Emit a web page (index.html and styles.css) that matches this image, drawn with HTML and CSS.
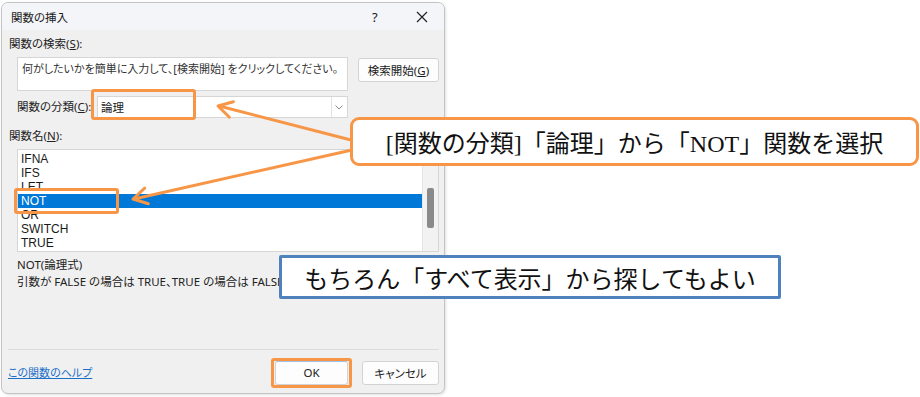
FILE: index.html
```html
<!DOCTYPE html>
<html lang="ja">

<head>
    <meta charset="UTF-8">
    <meta name="viewport" content="width=device-width, initial-scale=1.0">
    <title>関数の挿入</title>
    <link rel="stylesheet" href="styles.css">
</head>

<body>
    <div class="page">
        <div class="dialog">
            <div class="titlebar">
                <span class="title">関数の挿入</span>
                <span class="help">?</span>
                <svg class="close" width="12" height="12" viewBox="0 0 12 12">
                    <path d="M1 1 L11 11 M11 1 L1 11" stroke="#222" stroke-width="1.2" fill="none"/>
                </svg>
            </div>

            <div class="content">
                <div class="label">関数の検索(<u>S</u>):</div>
                <div class="search-row">
                    <div class="search-box">何がしたいかを簡単に入力して、[検索開始] をクリックしてください。</div>
                    <button class="btn search-btn">検索開始(<u>G</u>)</button>
                </div>

                <div class="category-row">
                    <span class="label category-label">関数の分類(<u>C</u>):</span>
                    <div class="select">
                        <span class="select-value">論理</span>
                        <span class="chevron">
                            <svg width="8" height="5" viewBox="0 0 8 5">
                                <path d="M0.5 0.5 L4 4 L7.5 0.5" stroke="#888" stroke-width="1" fill="none"/>
                            </svg>
                        </span>
                    </div>
                </div>

                <div class="label names-label">関数名(<u>N</u>):</div>
                <div class="listbox">
                    <ul class="items">
                        <li>IFNA</li>
                        <li>IFS</li>
                        <li>LET</li>
                        <li class="selected">NOT</li>
                        <li>OR</li>
                        <li>SWITCH</li>
                        <li>TRUE</li>
                    </ul>
                    <div class="scrollbar">
                        <div class="thumb"></div>
                    </div>
                </div>

                <div class="desc">
                    <p class="syntax">NOT(論理式)</p>
                    <p>引数が FALSE の場合は TRUE、TRUE の場合は FALSE を返します。</p>
                </div>
            </div>

            <div class="footer">
                <a href="#" class="help-link">この関数のヘルプ</a>
                <div class="buttons">
                    <button class="btn ok-btn">OK</button>
                    <button class="btn cancel-btn">キャンセル</button>
                </div>
            </div>
        </div>

        <!-- annotations drawn over the dialog -->
        <div class="mark mark-category"></div>
        <div class="mark mark-not"></div>
        <div class="mark mark-ok"></div>

        <svg class="arrows" width="920" height="397" viewBox="0 0 920 397">
            <g stroke="#f79646" stroke-width="3" fill="none" stroke-linecap="round" stroke-linejoin="round">
                <line x1="351" y1="140" x2="219" y2="106"/>
                <polyline points="229.4,117.2 218,106 233.4,101.7"/>
                <line x1="352" y1="150" x2="134" y2="199"/>
                <polyline points="148.3,203.7 133,199 144.7,188.1"/>
            </g>
        </svg>

        <div class="callout callout-orange">[関数の分類]「論理」から「NOT」関数を選択</div>
        <div class="callout callout-blue">もちろん「すべて表示」から探してもよい</div>
    </div>
</body>

</html>
```

FILE: styles.css
```css
*{
    box-sizing: border-box;
    padding: 0;
    margin: 0;
}

body{
    background-color: #ffffff;
    font-family: "Noto Sans", "Noto Sans CJK JP", sans-serif;
    font-feature-settings: "palt";
    color: #1a1a1a;
}

.page{
    position: relative;
    width: 920px;
    height: 397px;
    padding: 2px 0 0 1px;
    overflow: hidden;
}

.dialog{
    display: flex;
    flex-direction: column;
    width: 444px;
    height: 392px;
    border: 1px solid #c4c4c4;
    border-radius: 7px;
    background-color: #f0f0f0;
    overflow: hidden;
    box-shadow: rgba(0, 0, 0, 0.12) 1px 1px 3px;
}

.titlebar{
    display: flex;
    align-items: center;
    height: 27px;
    padding: 0 0 0 9px;
    background-color: #f3f5f9;
    font-size: 11.5px;
}

.title{
    flex: 1;
}

.help{
    width: 44px;
    font-size: 13px;
    font-family: "Noto Sans", sans-serif;
}

.close{
    margin-right: 16px;
}

.content{
    flex: 1;
    padding: 0 5px 0 7px;
    font-size: 11.5px;
}

.label{
    line-height: 16px;
    margin-top: 6px;
    color: #222;
}

.search-row{
    display: flex;
    align-items: flex-start;
    margin-top: 5px;
}

.search-box{
    width: 331px;
    height: 34px;
    margin-left: 8px;
    padding: 3px 4px;
    background-color: #ffffff;
    border: 1px solid #d6d6d6;
    font-size: 11px;
    line-height: 16px;
    color: #333;
}

.btn{
    height: 24px;
    border: 1px solid #d3d3d3;
    border-radius: 3px;
    background-color: #fdfdfd;
    font-family: "Noto Sans", "Noto Sans CJK JP", sans-serif;
    font-feature-settings: "palt";
    font-size: 11.5px;
    color: #1a1a1a;
}

.search-btn{
    width: 81px;
    margin-left: auto;
    margin-top: 1px;
}

.category-row{
    display: flex;
    align-items: center;
    margin-top: 5px;
}

.category-label{
    width: 80px;
    margin: 0 0 0 8px;
}

.select{
    display: flex;
    align-items: center;
    width: 251px;
    height: 22px;
    background-color: #ffffff;
    border: 1px solid #d6d6d6;
}

.select-value{
    flex: 1;
    padding-left: 3px;
    font-size: 11.5px;
}

.chevron{
    display: flex;
    align-items: center;
    justify-content: center;
    width: 15px;
    height: 20px;
    margin-right: 1px;
    border-left: 1px solid #e2e2e2;
}

.names-label{
    margin-top: 10px;
}

.listbox{
    display: flex;
    width: 422px;
    height: 103px;
    margin: 5px 0 0 8px;
    background-color: #ffffff;
    border: 1px solid #d6d6d6;
}

.items{
    flex: 1;
    list-style: none;
    padding-top: 2px;
    font-family: "Liberation Sans", sans-serif;
    font-size: 12px;
    line-height: 14px;
}

.items li{
    padding-left: 3px;
    height: 14px;
}

.items .selected{
    background-color: #0078d7;
    color: #ffffff;
}

.scrollbar{
    width: 16px;
    padding: 38px 0 0 4px;
    background-color: #f2f2f2;
    border-left: 1px solid #e6e6e6;
}

.thumb{
    width: 7px;
    height: 40px;
    border-radius: 2px;
    background-color: #8a8a8a;
}

.desc{
    margin: 4px 0 0 8px;
    font-size: 11.5px;
    line-height: 17px;
    color: #222;
}

.footer{
    display: flex;
    align-items: center;
    height: 44px;
    margin: 0 5px 0 6px;
    border-top: 1px solid #dcdcdc;
}

.help-link{
    flex: 1;
    font-size: 11px;
    color: #1a6fc9;
}

.buttons{
    display: flex;
    gap: 14px;
    margin-top: 2px;
}

.ok-btn{
    width: 73px;
    border-top-color: #9fc3e8;
}

.cancel-btn{
    width: 77px;
}

.mark{
    position: absolute;
    border: 3px solid #f79646;
    border-radius: 3px;
}

.mark-category{
    left: 91px;
    top: 89px;
    width: 105px;
    height: 31px;
}

.mark-not{
    left: 14px;
    top: 188px;
    width: 105px;
    height: 26px;
}

.mark-ok{
    left: 271px;
    top: 358px;
    width: 81px;
    height: 30px;
}

.arrows{
    position: absolute;
    left: 0;
    top: 0;
    pointer-events: none;
}

.callout{
    position: absolute;
    display: flex;
    align-items: center;
    justify-content: center;
    background-color: #ffffff;
    font-family: "Liberation Serif", "Noto Sans CJK JP", serif;
    font-feature-settings: normal;
    font-size: 24px;
    color: #111;
}

.callout-orange{
    left: 350px;
    top: 117px;
    width: 569px;
    height: 49px;
    border: 3px solid #f79646;
    border-radius: 9px;
}

.callout-blue{
    left: 279px;
    top: 255px;
    width: 502px;
    height: 44px;
    border: 3px solid #4f81bd;
    border-radius: 2px;
}
```
